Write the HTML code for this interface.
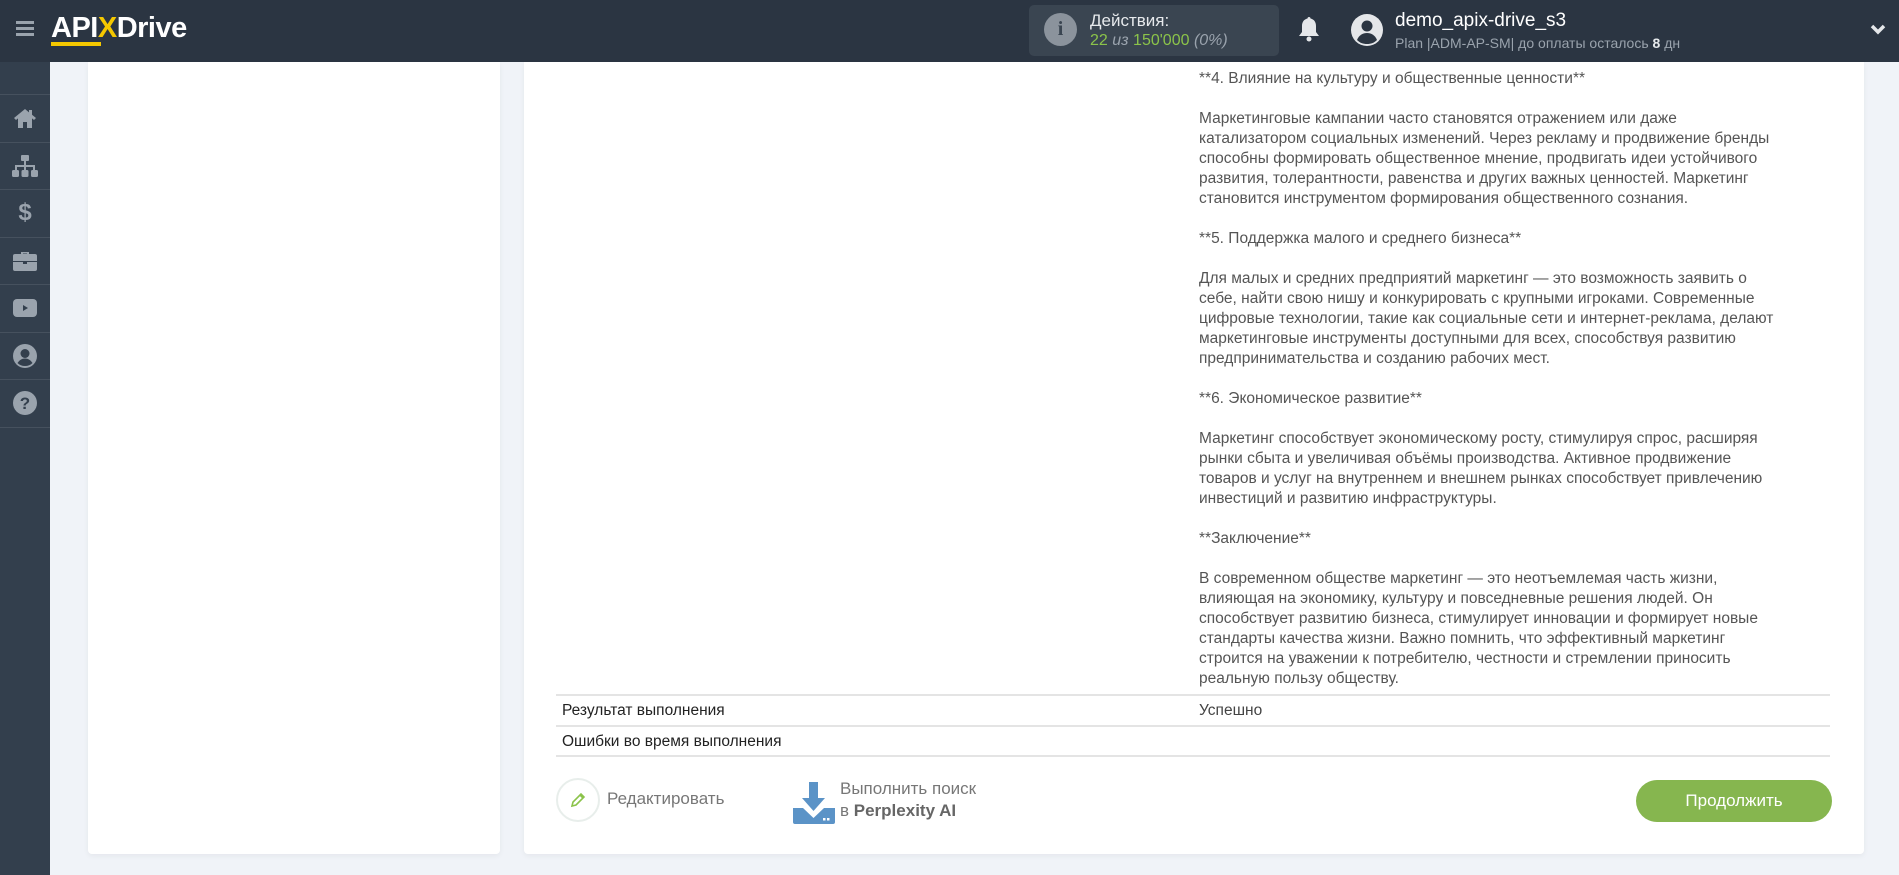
<!DOCTYPE html>
<html><head><meta charset="utf-8"><style>
*{margin:0;padding:0;box-sizing:border-box}
body{width:1899px;height:875px;overflow:hidden;background:#f0f3f8;font-family:"Liberation Sans",sans-serif;position:relative}
.hdr{position:absolute;left:0;top:0;width:1899px;height:62px;background:#2b3542}
.side{position:absolute;left:0;top:62px;width:50px;height:813px;background:#333f4d}
.side .it{height:47.5px;border-bottom:1px solid #46515e;display:flex;align-items:center;justify-content:center}
.card{position:absolute;background:#fff;border-radius:4px;box-shadow:0 2px 6px rgba(0,0,0,.05)}
.txt{position:absolute;left:1199px;top:69px;font-size:15.5px;line-height:20px;color:#555;white-space:nowrap}
.row{position:absolute;left:556px;width:1274px;border-top:2px solid #e4e4e4;font-size:15.5px;color:#222}
</style></head><body>
<div class="hdr">
 <div style="position:absolute;left:16px;top:21px;width:18px;height:3px;background:#9aa3ad;box-shadow:0 6px 0 #9aa3ad,0 12px 0 #9aa3ad"></div>
 <div style="position:absolute;left:51px;top:12px;font-size:29px;font-weight:bold;color:#fff;letter-spacing:-0.5px">API<span style="color:#f5c800">X</span>Drive</div>
 <div style="position:absolute;left:51px;top:42px;width:50px;height:4px;background:#f5c800"></div>
 <div style="position:absolute;left:1029px;top:5px;width:250px;height:51px;background:#3a4551;border-radius:5px">
  <div style="position:absolute;left:15px;top:8px;width:33px;height:33px;border-radius:50%;background:#8b939c;color:#3a4551;font-weight:bold;font-size:20px;text-align:center;line-height:33px;font-family:'Liberation Serif',serif">i</div>
  <div style="position:absolute;left:61px;top:6px;font-size:17px;color:#e6e9ec">Действия:</div>
  <div style="position:absolute;left:61px;top:27px;font-size:16px;color:#8bc34a">22 <i style="color:#9aa3ad">из</i> 150'000 <i style="color:#9aa3ad">(0%)</i></div>
 </div>
 <svg style="position:absolute;left:1298px;top:16px" width="22" height="26" viewBox="0 0 22 26"><path d="M11 1c1 0 1.5.7 1.5 1.5C16 3.3 18 6 18 10v6l3 4H1l3-4v-6c0-4 2-6.7 5.5-7.5C9.5 1.7 10 1 11 1z" fill="#e5e7ea"/><circle cx="11" cy="23" r="2.5" fill="#e5e7ea"/></svg>
 <svg style="position:absolute;left:1350px;top:13px" width="34" height="34" viewBox="0 0 34 34"><circle cx="17" cy="17" r="16" fill="#e5e7ea"/><circle cx="17" cy="13" r="5.5" fill="#2b3542"/><path d="M7 27c2-5 6-7 10-7s8 2 10 7c-3 3-6 4-10 4s-7-1-10-4z" fill="#2b3542"/></svg>
 <div style="position:absolute;left:1395px;top:10px;font-size:19px;color:#fff">demo_apix-drive_s3</div>
 <div style="position:absolute;left:1395px;top:35px;font-size:14px;color:#9aa3ad">Plan |ADM-AP-SM| до оплаты осталось <b style="color:#e6e9ec">8</b> дн</div>
 <svg style="position:absolute;left:1870px;top:24px" width="16" height="12" viewBox="0 0 16 12"><path d="M2 2l6 6 6-6" stroke="#e5e7ea" stroke-width="3.5" fill="none"/></svg>
</div>
<div class="side">
 <div class="it" style="height:33px"></div>
 <div class="it"><svg width="24" height="22" viewBox="0 0 24 22"><path d="M12 2L1 11l2 2 2-1.6V21h5v-6h4v6h5v-9.6l2 1.6 2-2-4-3.3V3h-3v2.4z" fill="#9aa3ad"/></svg></div>
 <div class="it"><svg width="26" height="22" viewBox="0 0 26 22"><rect x="9" y="0" width="8" height="6" rx="1" fill="#9aa3ad"/><path d="M13 6v5M4 16v-5h18v5M13 11v5" stroke="#9aa3ad" stroke-width="2" fill="none"/><rect x="0" y="15" width="7" height="7" rx="1.5" fill="#9aa3ad"/><rect x="9.5" y="15" width="7" height="7" rx="1.5" fill="#9aa3ad"/><rect x="19" y="15" width="7" height="7" rx="1.5" fill="#9aa3ad"/></svg></div>
 <div class="it"><span style="color:#9aa3ad;font-size:24px;font-weight:bold">$</span></div>
 <div class="it"><svg width="24" height="20" viewBox="0 0 24 20"><path d="M8 3V1h8v2h6a2 2 0 012 2v5H0V5a2 2 0 012-2zM10 3h4V2.5h-4z" fill="#9aa3ad"/><path d="M0 11h10v2h4v-2h10v7a2 2 0 01-2 2H2a2 2 0 01-2-2z" fill="#9aa3ad"/></svg></div>
 <div class="it"><svg width="24" height="18" viewBox="0 0 24 18"><rect width="24" height="18" rx="4" fill="#9aa3ad"/><path d="M10 6l5 3-5 3z" fill="#333f4d"/></svg></div>
 <div class="it"><svg width="24" height="24" viewBox="0 0 24 24"><circle cx="12" cy="12" r="12" fill="#9aa3ad"/><circle cx="12" cy="9.5" r="4.5" fill="#333f4d"/><path d="M4.5 19c2-3 4.5-4.5 7.5-4.5s5.5 1.5 7.5 4.5c-2 2-4.5 3-7.5 3s-5.5-1-7.5-3z" fill="#333f4d"/></svg></div>
 <div class="it"><svg width="24" height="24" viewBox="0 0 24 24"><circle cx="12" cy="12" r="12" fill="#9aa3ad"/><text x="12" y="18" text-anchor="middle" font-family="Liberation Sans" font-weight="bold" font-size="17" fill="#333f4d">?</text></svg></div>
</div>
<div class="card" style="left:88px;top:62px;width:412px;height:792px;border-radius:0 0 4px 4px"></div>
<div class="card" style="left:524px;top:62px;width:1340px;height:792px;border-radius:0 0 4px 4px"></div>
<div class="txt">**4. Влияние на культуру и общественные ценности**<br><br>Маркетинговые кампании часто становятся отражением или даже<br>катализатором социальных изменений. Через рекламу и продвижение бренды<br>способны формировать общественное мнение, продвигать идеи устойчивого<br>развития, толерантности, равенства и других важных ценностей. Маркетинг<br>становится инструментом формирования общественного сознания.<br><br>**5. Поддержка малого и среднего бизнеса**<br><br>Для малых и средних предприятий маркетинг — это возможность заявить о<br>себе, найти свою нишу и конкурировать с крупными игроками. Современные<br>цифровые технологии, такие как социальные сети и интернет-реклама, делают<br>маркетинговые инструменты доступными для всех, способствуя развитию<br>предпринимательства и созданию рабочих мест.<br><br>**6. Экономическое развитие**<br><br>Маркетинг способствует экономическому росту, стимулируя спрос, расширяя<br>рынки сбыта и увеличивая объёмы производства. Активное продвижение<br>товаров и услуг на внутреннем и внешнем рынках способствует привлечению<br>инвестиций и развитию инфраструктуры.<br><br>**Заключение**<br><br>В современном обществе маркетинг — это неотъемлемая часть жизни,<br>влияющая на экономику, культуру и повседневные решения людей. Он<br>способствует развитию бизнеса, стимулирует инновации и формирует новые<br>стандарты качества жизни. Важно помнить, что эффективный маркетинг<br>строится на уважении к потребителю, честности и стремлении приносить<br>реальную пользу обществу.</div>
<div class="row" style="top:694px;height:31px;line-height:29px"><span style="position:absolute;left:6px">Результат выполнения</span><span style="position:absolute;left:643px;color:#444">Успешно</span></div>
<div class="row" style="top:725px;height:32px;line-height:29px;border-bottom:2px solid #e4e4e4"><span style="position:absolute;left:6px">Ошибки во время выполнения</span></div>
<div style="position:absolute;left:556px;top:778px;width:44px;height:44px;border-radius:50%;border:2px solid #e8eeeb"></div>
<svg style="position:absolute;left:569px;top:791px" width="18" height="18" viewBox="0 0 18 18"><path d="M3 15l1-4 8-8 3 3-8 8zM11 4l3 3" stroke="#8bc34a" stroke-width="1.6" fill="none"/></svg>
<div style="position:absolute;left:607px;top:789px;font-size:17px;color:#777">Редактировать</div>
<svg style="position:absolute;left:793px;top:782px" width="42" height="42" viewBox="0 0 42 42"><path d="M16 0h9v16h7L20.5 29 9 16h7z" fill="#5b93c7"/><path d="M0 26h10l10.5 10L31 26h11v14a2 2 0 01-2 2H2a2 2 0 01-2-2z" fill="#5b93c7"/><rect x="30" y="36" width="2.5" height="2.5" fill="#fff"/><rect x="34" y="36" width="2.5" height="2.5" fill="#fff"/></svg>
<div style="position:absolute;left:840px;top:778px;font-size:17px;line-height:22px;color:#777">Выполнить поиск<br>в <b style="color:#666">Perplexity AI</b></div>
<div style="position:absolute;left:1636px;top:780px;width:196px;height:42px;border-radius:21px;background:#86b64f;color:#fff;font-size:17px;text-align:center;line-height:42px">Продолжить</div>
</body></html>
